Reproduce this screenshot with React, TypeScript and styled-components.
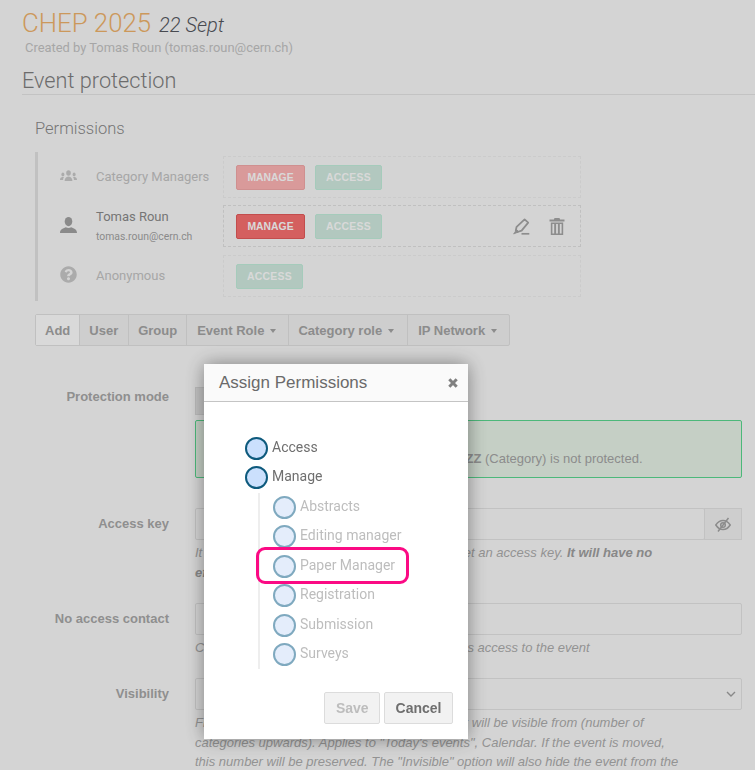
import React from 'react';
import styled, { createGlobalStyle } from 'styled-components';
import { FaQuestionCircle } from 'react-icons/fa';

const roboto = `Roboto, "Liberation Sans", sans-serif`;
const liberation = `"Liberation Sans", Arial, sans-serif`;

const GlobalStyle = createGlobalStyle`
  html, body {
    margin: 0;
    padding: 0;
    height: 770px;
    overflow: hidden;
    background: #fafafa;
    font-family: ${liberation};
  }
`;

const Page = styled.div`
  height: 770px;
  overflow: hidden;
  padding: 8px 0 0 22px;
  box-sizing: border-box;
`;

const TitleRow = styled.div`
  display: flex;
  align-items: baseline;
  gap: 8px;
  font-family: ${roboto};
`;

const EventTitle = styled.span`
  font-size: 25.8px;
  font-weight: 300;
  line-height: 30px;
  color: #f0b36c;
`;

const EventDate = styled.span`
  font-size: 20px;
  font-weight: 300;
  font-style: italic;
  color: #55585f;
`;

const CreatedBy = styled.div`
  margin: 1px 0 0 3px;
  font-family: ${roboto};
  font-size: 12.9px;
  line-height: 17px;
  color: #c4c4c4;
`;

const SectionTitle = styled.h2`
  margin: 11px 0 0;
  height: 27px;
  font-family: ${roboto};
  font-size: 21.7px;
  font-weight: 300;
  line-height: 27px;
  color: #7f7f7f;
  border-bottom: 1px solid #e6e6e6;
`;

const Section = styled.section`
  padding-left: 13px;
`;

const PermissionsTitle = styled.h3`
  margin: 24px 0 13px;
  font-family: ${roboto};
  font-size: 16.5px;
  font-weight: 300;
  line-height: 20px;
  color: #8a8a8a;
`;

const PermissionList = styled.div`
  width: 543px;
  padding: 4px 0;
  border-left: 3px solid #e3e3e3;
  display: flex;
  flex-direction: column;
  gap: 7px;
`;

const PermissionRow = styled.div`
  display: flex;
  align-items: center;
  height: 42px;
  &:last-child {
    margin-top: 1px;
  }
`;

const PrincipalIcon = styled.span<{ $faded?: boolean }>`
  width: 58px;
  padding-left: 22px;
  margin-bottom: 3px;
  box-sizing: border-box;
  display: flex;
  color: ${(p) => (p.$faded ? '#c9c9c9' : '#a3a3a3')};
`;

const Principal = styled.div`
  width: 127px;
  font-family: ${roboto};
`;

const PrincipalName = styled.div<{ $faded?: boolean }>`
  font-size: 13px;
  line-height: 16px;
  color: ${(p) => (p.$faded ? '#c4c4c4' : '#8b8b8b')};
`;

const PrincipalEmail = styled.div`
  margin-top: 5px;
  font-size: 10.4px;
  line-height: 13px;
  color: #a3a3a3;
`;

const RoleBox = styled.div<{ $strong?: boolean }>`
  flex: 1;
  height: 42px;
  box-sizing: border-box;
  padding: 0 12px;
  display: flex;
  align-items: center;
  gap: 10px;
  border: 1px dashed ${(p) => (p.$strong ? '#e2e2e2' : '#efefef')};
`;

const RoleTag = styled.span<{ $kind: 'manage' | 'manage-faded' | 'access' }>`
  width: ${(p) => (p.$kind === 'access' ? 67 : 69)}px;
  height: 25px;
  box-sizing: border-box;
  display: flex;
  align-items: center;
  justify-content: center;
  border-radius: 2px;
  font-size: 10.4px;
  font-weight: 700;
  letter-spacing: ${(p) => (p.$kind === 'access' ? 0.3 : 0)}px;
  color: #ffffff;
  background: ${(p) =>
    p.$kind === 'manage' ? '#f97070' : p.$kind === 'manage-faded' ? '#ffb5b5' : '#d2ece1'};
  border: 1px solid
    ${(p) => (p.$kind === 'manage' ? '#e45b5b' : p.$kind === 'manage-faded' ? '#f4aaaa' : '#c2efdc')};
`;

const RowActions = styled.div`
  margin-left: auto;
  padding-right: 3px;
  display: flex;
  align-items: center;
  gap: 19px;
  color: #a6a6a6;
`;

const Toolbar = styled.div`
  display: flex;
  width: fit-content;
  margin-top: 13px;
  height: 32px;
  box-sizing: border-box;
  border: 1px solid #e2e2e2;
  border-radius: 2px;
  background: #f2f2f2;
`;

const ToolbarItem = styled.div<{ $label?: boolean; $padding?: string }>`
  display: flex;
  align-items: center;
  gap: 6px;
  padding: ${(p) => p.$padding ?? '0 9px'};
  font-size: 13px;
  font-weight: 700;
  color: #a5a5a5;
  background: ${(p) => (p.$label ? '#ffffff' : 'transparent')};
  border-right: 1px solid #e2e2e2;
  &:last-child {
    border-right: 0;
  }
`;

const Caret = styled.span`
  width: 0;
  height: 0;
  margin-top: 1px;
  border-left: 3.5px solid transparent;
  border-right: 3.5px solid transparent;
  border-top: 4px solid #a5a5a5;
`;

const Form = styled.div`
  margin: 41px 13px 0 -13px;
  display: flex;
  flex-direction: column;
`;

const FormRow = styled.div<{ $gap: number }>`
  display: grid;
  grid-template-columns: 147px 1fr;
  column-gap: 26px;
  margin-bottom: ${(p) => p.$gap}px;
`;

const FormLabel = styled.label<{ $line?: number }>`
  text-align: right;
  font-size: 13px;
  font-weight: 700;
  line-height: ${(p) => p.$line ?? 31}px;
  color: #a8a8a8;
`;

const ModeButtons = styled.div`
  display: flex;
  height: 28px;
  margin-bottom: 5px;
`;

const ModeButton = styled.div`
  width: 90px;
  background: #e6e6e6;
  border: 1px solid #dcdcdc;
  font-size: 13px;
  line-height: 26px;
  text-align: center;
`;

const Alert = styled.div`
  height: 58px;
  box-sizing: border-box;
  padding: 9px 13px;
  border: 1px solid #5ad990;
  border-radius: 2px;
  background: #e8f4e8;
  font-size: 13px;
  line-height: 19px;
  color: #a5a5a5;
`;

const InputGroup = styled.div`
  display: flex;
  height: 32px;
`;

const TextBox = styled.div`
  flex: 1;
  box-sizing: border-box;
  border: 1px solid #e4e4e4;
  border-radius: 2px;
  background: #fafafa;
`;

const Addon = styled.div`
  width: 38px;
  box-sizing: border-box;
  display: flex;
  align-items: center;
  justify-content: center;
  margin-left: -1px;
  border: 1px solid #e4e4e4;
  background: #f2f2f2;
  color: #a5a5a5;
`;

const SelectBox = styled(TextBox)`
  flex: none;
  height: 32px;
  display: flex;
  align-items: center;
  justify-content: flex-end;
  padding-right: 5px;
  color: #a0a0a0;
`;

const Help = styled.p`
  margin: 3px 0 0;
  width: 490px;
  font-size: 13px;
  font-style: italic;
  line-height: 19.5px;
  color: #adadad;
  strong {
    color: #a0a0a0;
  }
`;

const Backdrop = styled.div`
  position: fixed;
  inset: 0;
  background: rgba(0, 0, 0, 0.15);
`;

const Dialog = styled.div`
  position: fixed;
  left: 204px;
  top: 364px;
  width: 264px;
  height: 375px;
  display: flex;
  flex-direction: column;
  background: #fff;
  box-shadow: 0 0 18px rgba(0, 0, 0, 0.4);
`;

const DialogHeader = styled.div`
  height: 38px;
  box-sizing: border-box;
  padding: 0 10px 0 15px;
  display: flex;
  align-items: center;
  justify-content: space-between;
  background: #fafafa;
  border-bottom: 1px solid #c4c4c4;
  font-size: 17px;
  color: #6a6a6a;
`;

const CloseButton = styled.span`
  display: flex;
  color: #808080;
`;

const DialogBody = styled.div`
  flex: 1;
  padding: 34.5px 0 0 41px;
  position: relative;
`;

const TreeItem = styled.div<{ $child?: boolean }>`
  height: 29.5px;
  display: flex;
  gap: 4px;
  margin-left: ${(p) => (p.$child ? 28 : 0)}px;
  font-family: ${roboto};
  font-size: 14px;
  line-height: 21px;
  color: ${(p) => (p.$child ? '#bdbdbd' : '#6f6f6f')};
`;

const Radio = styled.span<{ $child?: boolean }>`
  width: 23px;
  height: 23px;
  box-sizing: border-box;
  border-radius: 50%;
  flex: none;
  background: ${(p) => (p.$child ? '#e4edfb' : '#cbe0fd')};
  border: 2px solid ${(p) => (p.$child ? '#7fa9bf' : '#0e5a7d')};
`;

const TreeChildren = styled.div`
  margin-left: 13px;
  padding-top: 3px;
  margin-top: -3px;
  height: 176px;
  box-sizing: border-box;
  border-left: 2px solid #eeeeee;
  width: 180px;
  & > div {
    margin-left: 13px;
  }
`;

const Highlight = styled.div`
  position: absolute;
  left: 52px;
  top: 145px;
  width: 153px;
  height: 37px;
  box-sizing: border-box;
  border: 3px solid #fb0a84;
  border-radius: 9px;
`;

const DialogFooter = styled.div`
  height: 47px;
  display: flex;
  justify-content: flex-end;
  gap: 4px;
  padding-right: 15px;
`;

const DialogButton = styled.div<{ $disabled?: boolean }>`
  height: 32px;
  box-sizing: border-box;
  padding: 0 10.5px;
  display: flex;
  align-items: center;
  border: 1px solid #dcdcdc;
  border-radius: 2px;
  background: #f2f2f2;
  font-size: 14px;
  font-weight: 700;
  color: ${(p) => (p.$disabled ? '#bdbdbd' : '#6f6f6f')};
`;

const UsersIcon = () => (
  <svg width="17" height="12" viewBox="0 0 17 12" fill="currentColor">
    <ellipse cx="8.5" cy="3" rx="2.3" ry="2.8" />
    <path d="M4.600 11c0-2.800 1.200-4 3.900-4.600 2.700.6 3.900 1.800 3.900 4.600z" />
    <ellipse cx="2.900" cy="4.400" rx="1.500" ry="1.900" />
    <path d="M0 10c0-2 1-2.800 2.900-3.200.4.100.8.200 1.100.3-.6.700-.9 1.600-.9 2.900z" />
    <ellipse cx="14.100" cy="4.400" rx="1.500" ry="1.900" />
    <path d="M17 10c0-2-1-2.800-2.900-3.200-.4.100-.8.200-1.100.3.600.7.900 1.600.9 2.900z" />
  </svg>
);

const PersonIcon = () => (
  <svg width="17" height="16" viewBox="0 0 17 16" fill="currentColor">
    <ellipse cx="8.500" cy="4.600" rx="3.800" ry="4.600" />
    <path d="M0 16c0-3.600 2.600-4.600 5.800-5.800 1.700 1 3.700 1 5.400 0 3.200 1.200 5.800 2.200 5.800 5.800z" />
  </svg>
);

const PencilIcon = () => (
  <svg width="17" height="17" viewBox="0 0 17 17" fill="none" stroke="currentColor">
    <path d="M11.600 1.400l3.600 3.200-6.600 8-4.200 1.400-1.600-1.600.8-3.600z" strokeWidth="1.800" strokeLinejoin="round" />
    <path d="M.6 16l3-4.400 2.200 2.200z" fill="currentColor" strokeWidth="0.8" />
    <path d="M8.500 15.800h7.800" strokeWidth="1.700" />
  </svg>
);

const TrashIcon = () => (
  <svg width="16" height="17" viewBox="0 0 16 17" fill="currentColor">
    <path d="M5.500 0h5l.6 1.600h4.400v1.800H.5V1.600h4.400z" />
    <path d="M1.800 4.600h12.400V17H1.800zM3.400 6v9.600h1.800V6zM7.100 6v9.600h1.800V6zM10.800 6v9.600h1.800V6z" fillRule="evenodd" />
  </svg>
);

const EyeSlashIcon = () => (
  <svg width="16" height="15" viewBox="0 0 16 15" fill="none" stroke="currentColor" strokeWidth="1.500">
    <path d="M.8 8c2-3 4.300-4.500 7.200-4.500S13.200 5 15.200 8c-2 3-4.300 4.500-7.200 4.500S2.800 11 .8 8z" />
    <circle cx="8" cy="8" r="2.300" />
    <path d="M13.500 1L3 14.500" />
  </svg>
);

const ChevronIcon = () => (
  <svg width="10" height="6" viewBox="0 0 10 6" fill="none" stroke="currentColor" strokeWidth="1.400">
    <path d="M1 1l4 4 4-4" />
  </svg>
);

const CloseIcon = () => (
  <svg width="10" height="10" viewBox="0 0 10 10" fill="none" stroke="currentColor" strokeWidth="3">
    <path d="M1.300 1.300l7.400 7.400M8.700 1.300L1.300 8.700" />
  </svg>
);

const childRoles = ['Abstracts', 'Editing manager', 'Paper Manager', 'Registration', 'Submission', 'Surveys'];

export default function App() {
  return (
    <>
      <GlobalStyle />
      <Page>
        <TitleRow>
          <EventTitle>CHEP 2025</EventTitle>
          <EventDate>22 Sept</EventDate>
        </TitleRow>
        <CreatedBy>Created by Tomas Roun (tomas.roun@cern.ch)</CreatedBy>
        <SectionTitle>Event protection</SectionTitle>
        <Section>
          <PermissionsTitle>Permissions</PermissionsTitle>
          <PermissionList>
            <PermissionRow>
              <PrincipalIcon $faded>
                <UsersIcon />
              </PrincipalIcon>
              <Principal>
                <PrincipalName $faded>Category Managers</PrincipalName>
              </Principal>
              <RoleBox>
                <RoleTag $kind="manage-faded">MANAGE</RoleTag>
                <RoleTag $kind="access">ACCESS</RoleTag>
              </RoleBox>
            </PermissionRow>
            <PermissionRow>
              <PrincipalIcon>
                <PersonIcon />
              </PrincipalIcon>
              <Principal>
                <PrincipalName>Tomas Roun</PrincipalName>
                <PrincipalEmail>tomas.roun@cern.ch</PrincipalEmail>
              </Principal>
              <RoleBox $strong>
                <RoleTag $kind="manage">MANAGE</RoleTag>
                <RoleTag $kind="access">ACCESS</RoleTag>
                <RowActions>
                  <PencilIcon />
                  <TrashIcon />
                </RowActions>
              </RoleBox>
            </PermissionRow>
            <PermissionRow>
              <PrincipalIcon $faded>
                <FaQuestionCircle size={17} />
              </PrincipalIcon>
              <Principal>
                <PrincipalName $faded>Anonymous</PrincipalName>
              </Principal>
              <RoleBox>
                <RoleTag $kind="access">ACCESS</RoleTag>
              </RoleBox>
            </PermissionRow>
          </PermissionList>
          <Toolbar>
            <ToolbarItem $label>Add</ToolbarItem>
            <ToolbarItem $padding="0 10px 0 9px">User</ToolbarItem>
            <ToolbarItem $padding="0 9px">Group</ToolbarItem>
            <ToolbarItem $padding="0 12px 0 10px">
              Event Role <Caret />
            </ToolbarItem>
            <ToolbarItem $padding="0 13px 0 9px">
              Category role <Caret />
            </ToolbarItem>
            <ToolbarItem $padding="0 12px 0 10px">
              IP Network <Caret />
            </ToolbarItem>
          </Toolbar>
          <Form>
            <FormRow $gap={30}>
              <FormLabel $line={19}>Protection mode</FormLabel>
              <div>
                <ModeButtons>
                  <ModeButton>Public</ModeButton>
                  <ModeButton>Inheriting</ModeButton>
                </ModeButtons>
                <Alert>
                  <div>Inheriting</div>
                  <div>
                    This event inherits protection from its parent <strong>ZZ</strong> (Category) is not protected.
                  </div>
                </Alert>
              </div>
            </FormRow>
            <FormRow $gap={21}>
              <FormLabel>Access key</FormLabel>
              <div>
                <InputGroup>
                  <TextBox />
                  <Addon>
                    <EyeSlashIcon />
                  </Addon>
                </InputGroup>
                <Help>
                  It is not possible to use that event unless you set an access key.{' '}
                  <strong>It will have no effect</strong>
                </Help>
              </div>
            </FormRow>
            <FormRow $gap={20.5}>
              <FormLabel>No access contact</FormLabel>
              <div>
                <InputGroup>
                  <TextBox />
                </InputGroup>
                <Help>Contact information shown when someone lacks access to the event</Help>
              </div>
            </FormRow>
            <FormRow $gap={0}>
              <FormLabel>Visibility</FormLabel>
              <div>
                <SelectBox>
                  <ChevronIcon />
                </SelectBox>
                <Help>
                  From which point in the category tree this event will be visible from (number of categories
                  upwards). Applies to "Today's events", Calendar. If the event is moved, this number will be
                  preserved. The "Invisible" option will also hide the event from the category's event list.
                </Help>
              </div>
            </FormRow>
          </Form>
        </Section>
      </Page>
      <Backdrop />
      <Dialog>
        <DialogHeader>
          Assign Permissions
          <CloseButton>
            <CloseIcon />
          </CloseButton>
        </DialogHeader>
        <DialogBody>
          <TreeItem>
            <Radio />
            Access
          </TreeItem>
          <TreeItem>
            <Radio />
            Manage
          </TreeItem>
          <TreeChildren>
            {childRoles.map((role) => (
              <TreeItem key={role} $child>
                <Radio $child />
                {role}
              </TreeItem>
            ))}
          </TreeChildren>
          <Highlight />
        </DialogBody>
        <DialogFooter>
          <DialogButton $disabled>Save</DialogButton>
          <DialogButton>Cancel</DialogButton>
        </DialogFooter>
      </Dialog>
    </>
  );
}
